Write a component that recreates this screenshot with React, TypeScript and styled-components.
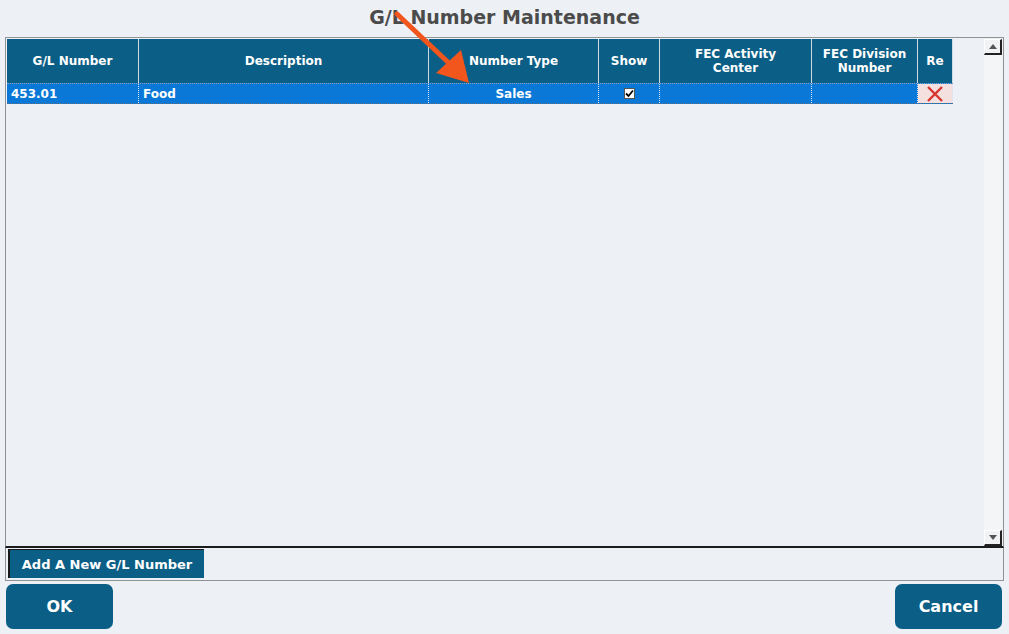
import React from "react";
import styled, { createGlobalStyle } from "styled-components";

const GlobalStyle = createGlobalStyle`
  html, body {
    margin: 0;
    padding: 0;
    background: #edf1f5;
    font-family: "DejaVu Sans", Tahoma, sans-serif;
  }
`;

const Page = styled.div`
  position: relative;
  width: 1009px;
  height: 634px;
  display: flex;
  flex-direction: column;
  background: #edf1f5;
  overflow: hidden;
`;

const Title = styled.h1`
  margin: 0;
  height: 37px;
  line-height: 35px;
  text-align: center;
  font-size: 19px;
  font-weight: bold;
  color: #4b4b4b;
`;

const GridFrame = styled.div`
  margin: 0 5px;
  height: 507px;
  display: flex;
  border-top: 1px solid #8f9396;
  border-left: 1px solid #8f9396;
  border-right: 1px solid #8f9396;
  border-bottom: 2px solid #1c1c1c;
  padding: 1px 0 0 1px;
`;

const TableArea = styled.div`
  flex: 1;
  display: flex;
  flex-direction: column;
`;

const Row = styled.div<{ $selected?: boolean }>`
  display: flex;
  height: ${(p) => (p.$selected ? "19px" : "44px")};
  background: ${(p) => (p.$selected ? "#0a78d6" : "transparent")};
  border-top: ${(p) => (p.$selected ? "1px dotted #8aa2b8" : "none")};
  border-bottom: ${(p) => (p.$selected ? "1px dotted #5b6f82" : "none")};
`;

const HeadCell = styled.div<{ $w: number }>`
  width: ${(p) => p.$w}px;
  box-sizing: border-box;
  background: #0b5e85;
  border-right: 1px solid #cfdbe4;
  color: #ffffff;
  font-size: 12px;
  font-weight: bold;
  display: flex;
  align-items: center;
  justify-content: center;
  text-align: center;
  line-height: 14px;
  white-space: pre-line;
`;

const Cell = styled.div<{ $w: number; $align?: string; $danger?: boolean }>`
  width: ${(p) => p.$w}px;
  box-sizing: border-box;
  border-right: 1px dotted #d4e6f7;
  background: ${(p) => (p.$danger ? "#f3e0df" : "transparent")};
  color: #ffffff;
  font-size: 12px;
  font-weight: bold;
  display: flex;
  align-items: center;
  justify-content: ${(p) => p.$align || "flex-start"};
  padding: 0 4px;
`;

const CheckBox = styled.span`
  width: 11px;
  height: 11px;
  box-sizing: border-box;
  background: #ffffff;
  border: 1px solid #555;
  display: flex;
  align-items: center;
  justify-content: center;
`;

const ScrollBar = styled.div`
  width: 18px;
  margin-right: 1px;
  display: flex;
  flex-direction: column;
  justify-content: space-between;
  background: #f3f5f7;
`;

const ScrollButton = styled.div`
  height: 16px;
  box-sizing: border-box;
  background: #f0f2f4;
  border-top: 1px solid #ffffff;
  border-left: 1px solid #ffffff;
  border-right: 2px solid #222;
  border-bottom: 2px solid #222;
  display: flex;
  align-items: center;
  justify-content: center;
`;

const Footer = styled.div`
  margin: 0 5px;
  height: 33px;
  box-sizing: border-box;
  border-left: 1px solid #8f9396;
  border-right: 1px solid #8f9396;
  border-bottom: 1px solid #8f9396;
  padding: 1px 0 0 2px;
`;

const AddButton = styled.button`
  height: 29px;
  width: 196px;
  background: #0b5e85;
  color: #ffffff;
  font-family: inherit;
  font-size: 13px;
  font-weight: bold;
  border: none;
  border-left: 2px solid #1a1a1a;
  border-top: 1px solid #1a1a1a;
  padding: 0;
`;

const Actions = styled.div`
  display: flex;
  justify-content: space-between;
  padding: 3px 7px 0 6px;
`;

const ActionButton = styled.button`
  width: 107px;
  height: 45px;
  border: none;
  border-radius: 7px;
  background: #0b5e85;
  color: #ffffff;
  font-family: inherit;
  font-size: 16px;
  font-weight: bold;
`;

const Pointer = styled.svg`
  position: absolute;
  left: 0;
  top: 0;
  pointer-events: none;
`;

const columns = [
  { title: "G/L Number", w: 132 },
  { title: "Description", w: 290 },
  { title: "Number Type", w: 170 },
  { title: "Show", w: 61 },
  { title: "FEC Activity\nCenter", w: 152 },
  { title: "FEC Division\nNumber", w: 106 },
  { title: "Re", w: 35 },
];

export default function App() {
  return (
    <Page>
      <GlobalStyle />
      <Title>G/L Number Maintenance</Title>
      <GridFrame>
        <TableArea>
          <Row>
            {columns.map((c) => (
              <HeadCell key={c.title} $w={c.w}>
                {c.title}
              </HeadCell>
            ))}
          </Row>
          <Row $selected style={{ width: 946 }}>
            <Cell $w={132}>453.01</Cell>
            <Cell $w={290}>Food</Cell>
            <Cell $w={170} $align="center">Sales</Cell>
            <Cell $w={61} $align="center">
              <CheckBox>
                <svg width="9" height="9" viewBox="0 0 9 9">
                  <path d="M1 4.5 L3.5 7 L8 1.5" stroke="#000" strokeWidth="1.8" fill="none" />
                </svg>
              </CheckBox>
            </Cell>
            <Cell $w={152} />
            <Cell $w={106} />
            <Cell $w={35} $align="center" $danger>
              <svg width="18" height="16" viewBox="0 0 18 16">
                <path d="M2 1 L16 15 M16 1 L2 15" stroke="#d9342f" strokeWidth="2.4" />
              </svg>
            </Cell>
          </Row>
        </TableArea>
        <ScrollBar>
          <ScrollButton>
            <svg width="8" height="5" viewBox="0 0 8 5">
              <path d="M0 5 L4 0 L8 5 Z" fill="#555" />
            </svg>
          </ScrollButton>
          <ScrollButton>
            <svg width="8" height="5" viewBox="0 0 8 5">
              <path d="M0 0 L4 5 L8 0 Z" fill="#555" />
            </svg>
          </ScrollButton>
        </ScrollBar>
      </GridFrame>
      <Footer>
        <AddButton>Add A New G/L Number</AddButton>
      </Footer>
      <Actions>
        <ActionButton>OK</ActionButton>
        <ActionButton>Cancel</ActionButton>
      </Actions>
      <Pointer width="1009" height="634">
        <line x1="397" y1="14" x2="452" y2="66" stroke="#f2561d" strokeWidth="5" strokeLinecap="round" />
        <polygon points="469,83 436,73 461,50" fill="#f2561d" />
      </Pointer>
    </Page>
  );
}
